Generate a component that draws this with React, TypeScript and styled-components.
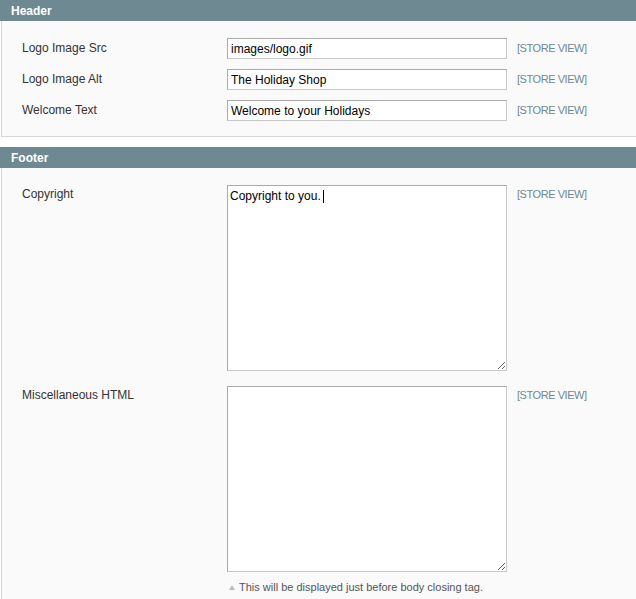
import React from "react";
import styled, { createGlobalStyle } from "styled-components";

const colors = {
  head: "#6f8992",
  fieldsetBg: "#fafafa",
  fieldsetBorder: "#d6d6d6",
  text: "#333333",
  scope: "#6f8992",
  note: "#555555",
};

const GlobalStyle = createGlobalStyle`
  html, body {
    margin: 0;
    padding: 0;
    background: #fff;
    overflow: hidden;
  }
  body {
    font-family: "Liberation Sans", Arial, Helvetica, sans-serif;
    font-size: 12px;
    color: ${colors.text};
  }
`;

const Page = styled.div`
  display: flex;
  flex-direction: column;
  gap: 10px;
  width: calc(100% + 6px);
`;

const Section = styled.section`
  display: flex;
  flex-direction: column;
`;

const SectionHead = styled.h4`
  margin: 0;
  height: 21px;
  padding: 0 11px;
  background: ${colors.head};
  color: #fff;
  font-size: 12px;
  font-weight: 700;
  line-height: 22px;
`;

const Fieldset = styled.div<{ $open?: boolean }>`
  display: flex;
  flex-direction: column;
  gap: 10px;
  margin-left: 1px;
  padding: 17px 0 ${(p) => (p.$open ? "40px" : "15px")} 20px;
  border: 1px solid ${colors.fieldsetBorder};
  border-top: 0;
  border-bottom-width: ${(p) => (p.$open ? "0" : "1px")};
  background: ${colors.fieldsetBg};
`;

const Row = styled.div<{ $tall?: boolean }>`
  display: grid;
  grid-template-columns: 195px 280px auto;
  column-gap: 10px;
  align-items: start;
  margin-bottom: ${(p) => (p.$tall ? "5px" : "0")};
`;

const Label = styled.label<{ $tall?: boolean }>`
  padding-top: ${(p) => (p.$tall ? "2px" : "3px")};
  line-height: 15px;
  color: ${colors.text};
`;

const Value = styled.div`
  position: relative;
  display: flex;
  flex-direction: column;
`;

const TextInput = styled.input`
  box-sizing: border-box;
  width: 280px;
  height: 21px;
  margin: 0;
  padding: 0 3px;
  border: 1px solid;
  border-color: #aaa #c8c8c8 #c8c8c8 #aaa;
  background: #fff;
  font: 12px "Liberation Sans", Arial, sans-serif;
  color: #000;
  outline: none;
`;

const TextArea = styled.textarea`
  display: block;
  box-sizing: border-box;
  width: 280px;
  height: 186px;
  margin: 0;
  padding: 3px 2px 2px;
  border: 1px solid;
  border-color: #aaa #c8c8c8 #c8c8c8 #aaa;
  background: #fff;
  font: 12px/15px "Liberation Sans", Arial, sans-serif;
  color: #000;
  outline: none;
`;

const Caret = styled.span`
  position: absolute;
  top: 5px;
  left: 96px;
  width: 1px;
  height: 13px;
  background: #000;
`;

const Scope = styled.span<{ $tall?: boolean }>`
  padding-top: ${(p) => (p.$tall ? "3px" : "4px")};
  font-size: 11px;
  line-height: 13px;
  letter-spacing: -0.45px;
  color: ${colors.scope};
  white-space: nowrap;
`;

const Note = styled.p`
  display: flex;
  align-items: center;
  gap: 4px;
  margin: 8px 0 0 2px;
  font-size: 11px;
  line-height: 14px;
  color: ${colors.note};

  &::before {
    content: "";
    width: 0;
    height: 0;
    border-left: 3px solid transparent;
    border-right: 3px solid transparent;
    border-bottom: 5px solid #b4bec4;
  }
`;

const headerFields = [
  { label: "Logo Image Src", value: "images/logo.gif" },
  { label: "Logo Image Alt", value: "The Holiday Shop" },
  { label: "Welcome Text", value: "Welcome to your Holidays" },
];

export default function App() {
  return (
    <>
      <GlobalStyle />
      <Page>
        <Section>
          <SectionHead>Header</SectionHead>
          <Fieldset>
            {headerFields.map((f) => (
              <Row key={f.label}>
                <Label>{f.label}</Label>
                <Value>
                  <TextInput defaultValue={f.value} />
                </Value>
                <Scope>[STORE VIEW]</Scope>
              </Row>
            ))}
          </Fieldset>
        </Section>
        <Section>
          <SectionHead>Footer</SectionHead>
          <Fieldset $open>
            <Row $tall>
              <Label $tall>Copyright</Label>
              <Value>
                <TextArea defaultValue="Copyright to you. " />
                <Caret />
              </Value>
              <Scope $tall>[STORE VIEW]</Scope>
            </Row>
            <Row>
              <Label $tall>Miscellaneous HTML</Label>
              <Value>
                <TextArea defaultValue="" />
                <Note>This will be displayed just before body closing tag.</Note>
              </Value>
              <Scope $tall>[STORE VIEW]</Scope>
            </Row>
          </Fieldset>
        </Section>
      </Page>
    </>
  );
}
